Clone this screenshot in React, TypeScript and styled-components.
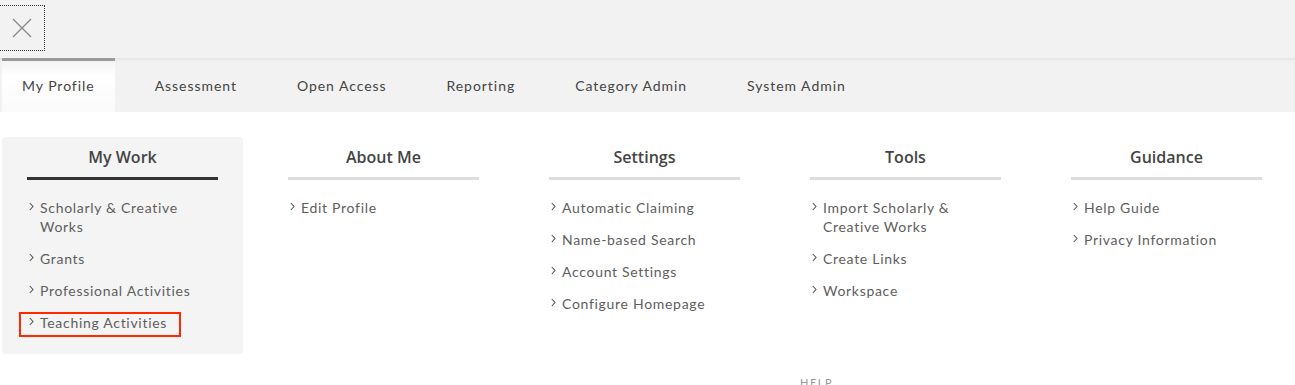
import React from "react";
import styled, { createGlobalStyle } from "styled-components";

const Global = createGlobalStyle`
  html, body { margin: 0; padding: 0; background: #fff; }
  body { font-family: "Lato", "Liberation Sans", sans-serif; color: #555; }
  *, *::before, *::after { box-sizing: border-box; }
`;

const Page = styled.div`
  width: 1295px;
  height: 385px;
  overflow: hidden;
  display: flex;
  flex-direction: column;
`;

const TopBar = styled.div`
  height: 58px;
  background: #f2f2f2;
  padding-top: 5px;
`;

const CloseButton = styled.button`
  width: 45px;
  height: 46px;
  border: 1px dotted #333;
  border-left: none;
  background: transparent;
  padding: 0;
  display: flex;
  align-items: center;
  justify-content: center;
  cursor: pointer;
`;

const TabBar = styled.nav`
  height: 54px;
  background: #f2f2f2;
  display: flex;
  padding-left: 2px;
  box-shadow: inset 0 4px 4px -3px rgba(0, 0, 0, 0.08);
`;

const Tab = styled.div<{ $active?: boolean }>`
  padding: 0 20px;
  margin-right: 20px;
  display: flex;
  align-items: center;
  padding-bottom: 2px;
  font-family: "Lato", "Liberation Sans", sans-serif;
  font-size: 14px;
  letter-spacing: 0.95px;
  color: #444;
  border-top: 3px solid ${(p) => (p.$active ? "#9a9a9a" : "transparent")};
  background: ${(p) =>
    p.$active ? "linear-gradient(#f4f4f4, #ffffff 30%, #fafafa)" : "transparent"};
`;

const Columns = styled.div`
  display: grid;
  grid-template-columns: repeat(5, 241px);
  column-gap: 20px;
  padding: 25px 0 0 2px;
  align-items: start;
`;

const Column = styled.section<{ $active?: boolean }>`
  background: ${(p) => (p.$active ? "#f4f4f4" : "transparent")};
  border-radius: 4px;
  padding: 9px 25px 22px;
`;

const Heading = styled.h3<{ $active?: boolean }>`
  margin: 0;
  font-family: "Open Sans", sans-serif;
  font-weight: 600;
  font-size: 16px;
  line-height: 22px;
  color: #444;
  text-align: center;
  padding-bottom: 9px;
  border-bottom: 3px solid ${(p) => (p.$active ? "#333" : "#ddd")};
`;

const List = styled.ul`
  list-style: none;
  margin: 0;
  padding: 18px 0 0;
  display: flex;
  flex-direction: column;
  gap: 13px;
`;

const Item = styled.li<{ $marked?: boolean }>`
  position: relative;
  padding-left: 13px;
  font-size: 14px;
  line-height: 19px;
  letter-spacing: 0.7px;
  color: #5e5e5e;
  ${(p) =>
    p.$marked &&
    `
    &::after {
      content: "";
      position: absolute;
      left: -8px;
      top: -1px;
      width: 162px;
      height: 25px;
      border: 2px solid #ff2a00;
    }
  `}
`;

const Chevron = styled.svg`
  position: absolute;
  left: 2px;
  top: 4px;
  width: 5px;
  height: 9px;
`;

const Footer = styled.div`
  margin-top: auto;
  height: 5px;
  position: relative;
`;

const HelpLabel = styled.span`
  position: absolute;
  top: -4px;
  left: 800px;
  font-size: 11px;
  letter-spacing: 1.5px;
  color: #999;
`;

const ChevronIcon = () => (
  <Chevron viewBox="0 0 5 9">
    <path d="M0.8 1 L4 4.5 L0.8 8" fill="none" stroke="#555" strokeWidth="1.1" />
  </Chevron>
);

type Col = { title: string; items: string[]; active?: boolean; marked?: string };

const columns: Col[] = [
  {
    title: "My Work",
    active: true,
    marked: "Teaching Activities",
    items: ["Scholarly & Creative Works", "Grants", "Professional Activities", "Teaching Activities"],
  },
  { title: "About Me", items: ["Edit Profile"] },
  {
    title: "Settings",
    items: ["Automatic Claiming", "Name-based Search", "Account Settings", "Configure Homepage"],
  },
  { title: "Tools", items: ["Import Scholarly & Creative Works", "Create Links", "Workspace"] },
  { title: "Guidance", items: ["Help Guide", "Privacy Information"] },
];

const tabs = ["My Profile", "Assessment", "Open Access", "Reporting", "Category Admin", "System Admin"];

export default function App() {
  return (
    <Page>
      <Global />
      <TopBar>
        <CloseButton aria-label="Close">
          <svg width="20" height="20" viewBox="0 0 20 20">
            <path d="M1 1 L19 19 M19 1 L1 19" stroke="#888" strokeWidth="1.3" />
          </svg>
        </CloseButton>
      </TopBar>
      <TabBar>
        {tabs.map((t, i) => (
          <Tab key={t} $active={i === 0}>
            {t}
          </Tab>
        ))}
      </TabBar>
      <Columns>
        {columns.map((c) => (
          <Column key={c.title} $active={c.active}>
            <Heading $active={c.active}>{c.title}</Heading>
            <List>
              {c.items.map((it) => (
                <Item key={it} $marked={c.marked === it}>
                  <ChevronIcon />
                  {it}
                </Item>
              ))}
            </List>
          </Column>
        ))}
      </Columns>
      <Footer>
        <HelpLabel>HELP</HelpLabel>
      </Footer>
    </Page>
  );
}
